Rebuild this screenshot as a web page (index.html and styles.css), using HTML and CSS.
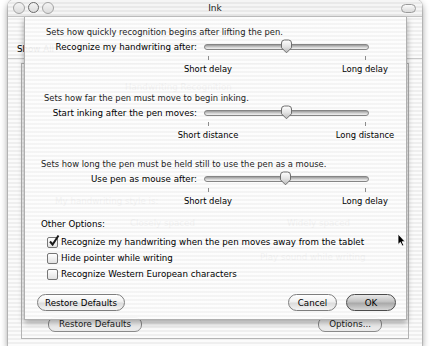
FILE: index.html
```html
<!DOCTYPE html>
<html lang="en">
<head>
    <meta charset="UTF-8">
    <title>Ink</title>
    <link rel="stylesheet" href="styles.css">
</head>
<body>
    <div class="window">
        <div class="titlebar">
            <div class="lights">
                <span class="light"></span>
                <span class="light light-mid"></span>
                <span class="light"></span>
            </div>
            <div class="title">Ink</div>
            <div class="toolbar-pill"></div>
        </div>

        <div class="content">
            <div class="toolbar"></div>
            <div class="showall">Show All</div>

            <div class="tabbox">
                <p class="ghost ghost-heading">Handwriting Recognition</p>
                <p class="ghost ghost-style">My handwriting style is:</p>
                <div class="ghost ghost-spacing"><span>Closely spaced</span><span>Widely spaced</span></div>
                <p class="ghost ghost-sound">Play sound while writing</p>
                <div class="pane-buttons">
                    <span class="ghost-button ghost-restore">Restore Defaults</span>
                    <span class="ghost-button ghost-options">Options...</span>
                </div>
            </div>

            <div class="sheet">
                <div class="setting">
                    <p class="hint hint-1">Sets how quickly recognition begins after lifting the pen.</p>
                    <div class="slider-row">
                        <span class="slider-label">Recognize my handwriting after:</span>
                        <div class="track">
                            <div class="groove"></div>
                            <svg class="knob" style="left: 76px" width="13" height="15" viewBox="0 0 13 15"><path d="M1.5 4 Q1.5 1 4.5 1 H8.5 Q11.5 1 11.5 4 V8.8 L6.5 13.8 L1.5 8.8 Z" fill="url(#knobFill)" stroke="#6e6e6e"/></svg>
                        </div>
                        <div class="scale"><span class="mark">Short delay</span><span class="mark">Long delay</span></div>
                    </div>
                </div>

                <div class="setting">
                    <p class="hint hint-2">Sets how far the pen must move to begin inking.</p>
                    <div class="slider-row">
                        <span class="slider-label">Start inking after the pen moves:</span>
                        <div class="track">
                            <div class="groove"></div>
                            <svg class="knob" style="left: 76px" width="13" height="15" viewBox="0 0 13 15"><path d="M1.5 4 Q1.5 1 4.5 1 H8.5 Q11.5 1 11.5 4 V8.8 L6.5 13.8 L1.5 8.8 Z" fill="url(#knobFill)" stroke="#6e6e6e"/></svg>
                        </div>
                        <div class="scale"><span class="mark">Short distance</span><span class="mark">Long distance</span></div>
                    </div>
                </div>

                <div class="setting">
                    <p class="hint">Sets how long the pen must be held still to use the pen as a mouse.</p>
                    <div class="slider-row">
                        <span class="slider-label">Use pen as mouse after:</span>
                        <div class="track">
                            <div class="groove"></div>
                            <svg class="knob" style="left: 75px" width="13" height="15" viewBox="0 0 13 15"><path d="M1.5 4 Q1.5 1 4.5 1 H8.5 Q11.5 1 11.5 4 V8.8 L6.5 13.8 L1.5 8.8 Z" fill="url(#knobFill)" stroke="#6e6e6e"/></svg>
                        </div>
                        <div class="scale"><span class="mark">Short delay</span><span class="mark">Long delay</span></div>
                    </div>
                </div>

                <p class="group-title">Other Options:</p>
                <ul class="options">
                    <li><span class="checkbox checked"><svg width="12" height="13" viewBox="0 0 12 13"><path d="M2 7.5 L4.6 10.5 L10.5 1.5" fill="none" stroke="#1a1a1a" stroke-width="2"/></svg></span>Recognize my handwriting when the pen moves away from the tablet</li>
                    <li><span class="checkbox"></span>Hide pointer while writing</li>
                    <li><span class="checkbox"></span>Recognize Western European characters</li>
                </ul>

                <div class="buttons">
                    <button class="btn btn-restore">Restore Defaults</button>
                    <span class="spacer"></span>
                    <button class="btn btn-cancel">Cancel</button>
                    <button class="btn btn-ok">OK</button>
                </div>
            </div>

            <svg class="cursor" width="9" height="14" viewBox="0 0 9 14"><path d="M1 1 V11.5 L3.4 9.3 L5.2 13 L6.8 12.3 L5.1 8.7 H8.2 Z" fill="#000" stroke="#fff" stroke-width="0.8"/></svg>
        </div>
    </div>

    <svg width="0" height="0" class="defs">
        <defs>
            <linearGradient id="knobFill" x1="0" y1="0" x2="0" y2="1">
                <stop offset="0" stop-color="#ffffff"/>
                <stop offset="0.5" stop-color="#e4e4e4"/>
                <stop offset="1" stop-color="#b8b8b8"/>
            </linearGradient>
        </defs>
    </svg>
</body>
</html>
```

FILE: styles.css
```css
body {
    margin: 0;
    background-color: #fff;
    font-family: "DejaVu Sans", Verdana, sans-serif;
    color: #000;
}
p {
    margin: 0;
}
.defs {
    position: absolute;
}
.window {
    width: 414px;
    height: 346px;
    margin-left: 8px;
    border-radius: 6px 6px 0 0;
    background: repeating-linear-gradient(to bottom, #fbfbfb 0 2px, #efefef 2px 4px);
    box-shadow: 0 3px 7px rgba(0,0,0,0.45), 0 0 0 1px rgba(0,0,0,0.12);
    overflow: hidden;
}
.titlebar {
    height: 16px;
    display: grid;
    grid-template-columns: 1fr auto 1fr;
    align-items: center;
    background: repeating-linear-gradient(to bottom, #f5f5f5 0 2px, #e9e9e9 2px 4px);
    border-bottom: 1px solid #c4c4c4;
}
.lights {
    display: flex;
    gap: 3px;
    padding-left: 5px;
}
.light {
    width: 10px;
    height: 10px;
    border-radius: 50%;
    border: 1px solid #a3a3a3;
    background: linear-gradient(#f4f4f4, #dcdcdc);
}
.light-mid {
    border: 1.5px solid #6a6a6a;
    width: 9px;
    height: 9px;
}
.title {
    font-size: 9px;
    color: #222;
}
.toolbar-pill {
    justify-self: end;
    margin-right: 6px;
    width: 13px;
    height: 7px;
    border-radius: 5px;
    border: 1px solid #9a9a9a;
    background: linear-gradient(#fafafa, #dadada);
}
.content {
    position: relative;
    height: 329px;
    padding: 0 13px 0 13px;
    box-sizing: border-box;
}
.toolbar {
    height: 23px;
    margin: 0 -13px;
}
.showall {
    height: 18px;
    line-height: 18px;
    font-size: 8.7px;
    margin: 0 -13px;
    padding-left: 9px;
    border-bottom: 1px solid #c9c9c9;
}
.tabbox {
    height: 276px;
    margin-top: 4px;
    border: 1px solid #b4b4b4;
    box-sizing: border-box;
    display: flex;
    flex-direction: column;
    font-size: 8.7px;
    color: #555;
}
.ghost-heading {
    margin: 18px 0 0 103px;
}
.ghost-style {
    margin: 104px 0 0 33px;
}
.ghost-spacing {
    display: flex;
    justify-content: space-between;
    margin: 12px 0 0 108px;
    width: 220px;
}
.ghost-sound {
    margin: 24px 0 0 238px;
}
.pane-buttons {
    margin-top: auto;
    display: flex;
    justify-content: space-between;
    padding: 0 26px 6px 26px;
    color: #222;
}
.ghost-button {
    height: 13px;
    line-height: 13px;
    padding: 0 10px;
    border: 1px solid #8a8a8a;
    border-radius: 7px;
    background: linear-gradient(#ffffff, #e8e8e8);
}
.sheet {
    position: absolute;
    left: 16px;
    top: 0;
    width: 383px;
    height: 303px;
    box-sizing: border-box;
    padding: 9px 16px 9px 16px;
    background: repeating-linear-gradient(to bottom, rgba(253,253,253,0.94) 0 2px, rgba(244,244,244,0.94) 2px 4px);
    border: 1px solid #b0b0b0;
    border-top: none;
    box-shadow: 0 3px 6px rgba(0,0,0,0.35);
}
.setting {
    margin-bottom: 17px;
}
.setting:nth-child(3) {
    margin-bottom: 11px;
}
.hint {
    font-size: 8.4px;
    line-height: 12px;
    height: 12px;
    margin-bottom: 2px;
    color: #1c1c1c;
}
.hint-1 {
    padding-left: 5px;
}
.hint-2 {
    padding-left: 3px;
}
.slider-row {
    display: grid;
    grid-template-columns: 156px 165px;
    column-gap: 7px;
}
.slider-label {
    font-size: 8.7px;
    line-height: 14px;
    text-align: right;
    white-space: nowrap;
}
.track {
    position: relative;
    height: 14px;
    display: flex;
    align-items: center;
}
.groove {
    width: 100%;
    height: 4px;
    border-radius: 3px;
    border: 1px solid #858585;
    background: linear-gradient(#9a9a9a, #d6d6d6 60%, #f2f2f2);
}
.knob {
    position: absolute;
    top: -1px;
}
.scale {
    grid-column: 2;
    display: flex;
    justify-content: space-between;
    margin: 0 -26px;
    padding-top: 2px;
}
.mark {
    width: 60px;
    display: flex;
    flex-direction: column;
    align-items: center;
    font-size: 8.4px;
    line-height: 12px;
    white-space: nowrap;
}
.mark::before {
    content: "";
    width: 1px;
    height: 4px;
    margin-bottom: 3px;
    background-color: #8c8c8c;
}
.group-title {
    font-size: 8.7px;
    line-height: 12px;
}
.options {
    list-style: none;
    margin: 4px 0 0 0;
    padding: 0;
}
.options li {
    height: 16px;
    display: flex;
    align-items: center;
    gap: 3px;
    font-size: 8.7px;
    white-space: nowrap;
}
.checkbox {
    position: relative;
    width: 9px;
    height: 9px;
    margin-left: 6px;
    border: 1px solid #767676;
    border-radius: 2px;
    background: linear-gradient(#ffffff, #e2e2e2);
}
.checkbox svg {
    position: absolute;
    left: 0;
    top: -4px;
}
.buttons {
    display: flex;
    gap: 9px;
    margin: 12px -6px 0 -4px;
    height: 17px;
}
.spacer {
    flex: 1;
}
.btn {
    height: 17px;
    padding: 0;
    font-family: inherit;
    font-size: 8.7px;
    color: #000;
    border: 1px solid #7e7e7e;
    border-radius: 9px;
    background: linear-gradient(#ffffff, #f0f0f0 45%, #dcdcdc 55%, #f4f4f4);
}
.btn-restore {
    width: 88px;
}
.btn-cancel {
    width: 49px;
}
.btn-ok {
    width: 50px;
    border-color: #4c4c4c;
    background: linear-gradient(#e8e8e8, #c2c2c2 45%, #a9a9a9 55%, #d6d6d6);
}
.cursor {
    position: absolute;
    left: 389px;
    top: 216px;
}
```
